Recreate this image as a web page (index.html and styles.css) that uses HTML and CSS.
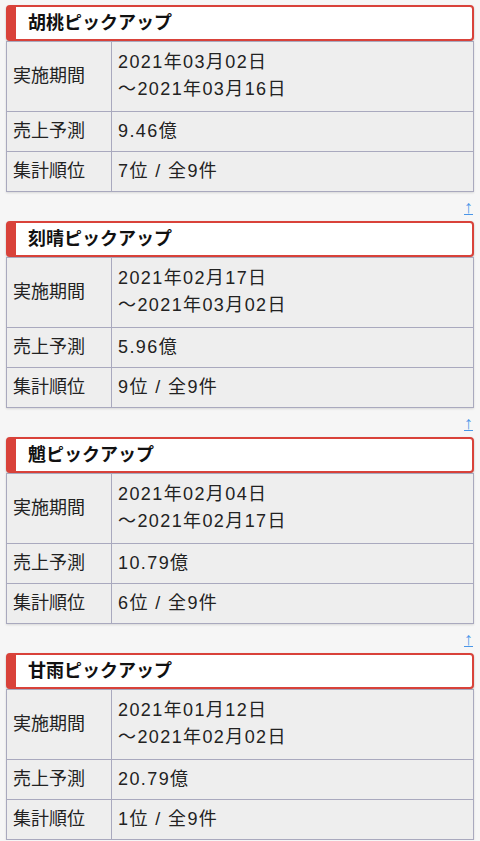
FILE: index.html
```html
<!DOCTYPE html>
<html lang="ja">

<head>
    <meta charset="UTF-8">
    <title>ピックアップ売上予測</title>
    <link rel="stylesheet" href="styles.css">
</head>

<body>
    <div class="page">
        <section class="gacha">
            <h3 class="gacha-title">胡桃ピックアップ</h3>
            <table class="gacha-table">
                <tr class="two-line">
                    <th>実施期間</th>
                    <td>2021年03月02日<br>～2021年03月16日</td>
                </tr>
                <tr>
                    <th>売上予測</th>
                    <td>9.46億</td>
                </tr>
                <tr>
                    <th>集計順位</th>
                    <td>7位 / 全9件</td>
                </tr>
            </table>
            <div class="to-top"><a href="#">↑</a></div>
        </section>

        <section class="gacha">
            <h3 class="gacha-title">刻晴ピックアップ</h3>
            <table class="gacha-table">
                <tr class="two-line">
                    <th>実施期間</th>
                    <td>2021年02月17日<br>～2021年03月02日</td>
                </tr>
                <tr>
                    <th>売上予測</th>
                    <td>5.96億</td>
                </tr>
                <tr>
                    <th>集計順位</th>
                    <td>9位 / 全9件</td>
                </tr>
            </table>
            <div class="to-top"><a href="#">↑</a></div>
        </section>

        <section class="gacha">
            <h3 class="gacha-title">魈ピックアップ</h3>
            <table class="gacha-table">
                <tr class="two-line">
                    <th>実施期間</th>
                    <td>2021年02月04日<br>～2021年02月17日</td>
                </tr>
                <tr>
                    <th>売上予測</th>
                    <td>10.79億</td>
                </tr>
                <tr>
                    <th>集計順位</th>
                    <td>6位 / 全9件</td>
                </tr>
            </table>
            <div class="to-top"><a href="#">↑</a></div>
        </section>

        <section class="gacha">
            <h3 class="gacha-title">甘雨ピックアップ</h3>
            <table class="gacha-table">
                <tr class="two-line">
                    <th>実施期間</th>
                    <td>2021年01月12日<br>～2021年02月02日</td>
                </tr>
                <tr>
                    <th>売上予測</th>
                    <td>20.79億</td>
                </tr>
                <tr>
                    <th>集計順位</th>
                    <td>1位 / 全9件</td>
                </tr>
            </table>
        </section>
    </div>
</body>

</html>
```

FILE: styles.css
```css
body {
    margin: 0;
    background: #f6f6f6;
    font-family: 'Liberation Sans', 'Noto Sans CJK JP', sans-serif;
    color: #222;
}

.page {
    padding: 5px 6px 0;
}

.gacha-title {
    margin: 0;
    height: 32px;
    padding-left: 12px;
    line-height: 32px;
    font-size: 18px;
    font-weight: bold;
    color: #111;
    background: white;
    border: 2px solid #d9423a;
    border-left: 10px solid #d9423a;
    border-radius: 4px;
    box-shadow: 0 1px 2px rgba(0, 0, 0, 0.25);
}

.gacha-table {
    width: 100%;
    border-collapse: collapse;
    background: #eeeeee;
    font-size: 18px;
    box-shadow: 0 1px 2px rgba(0, 0, 0, 0.12);
}

.gacha-table th,
.gacha-table td {
    border: 1px solid #a9a9be;
    padding: 6px;
    line-height: 27px;
    text-align: left;
    font-weight: normal;
    color: #222;
}

.gacha-table td {
    letter-spacing: 1.4px;
}

.gacha-table th {
    width: 92px;
}

.gacha-table .two-line th,
.gacha-table .two-line td {
    padding-top: 7px;
    padding-bottom: 8px;
}

.to-top {
    height: 29px;
    text-align: right;
    font-size: 18px;
    line-height: 31px;
}

.to-top a {
    color: #4a96e8;
    padding-right: 1px;
}
```
